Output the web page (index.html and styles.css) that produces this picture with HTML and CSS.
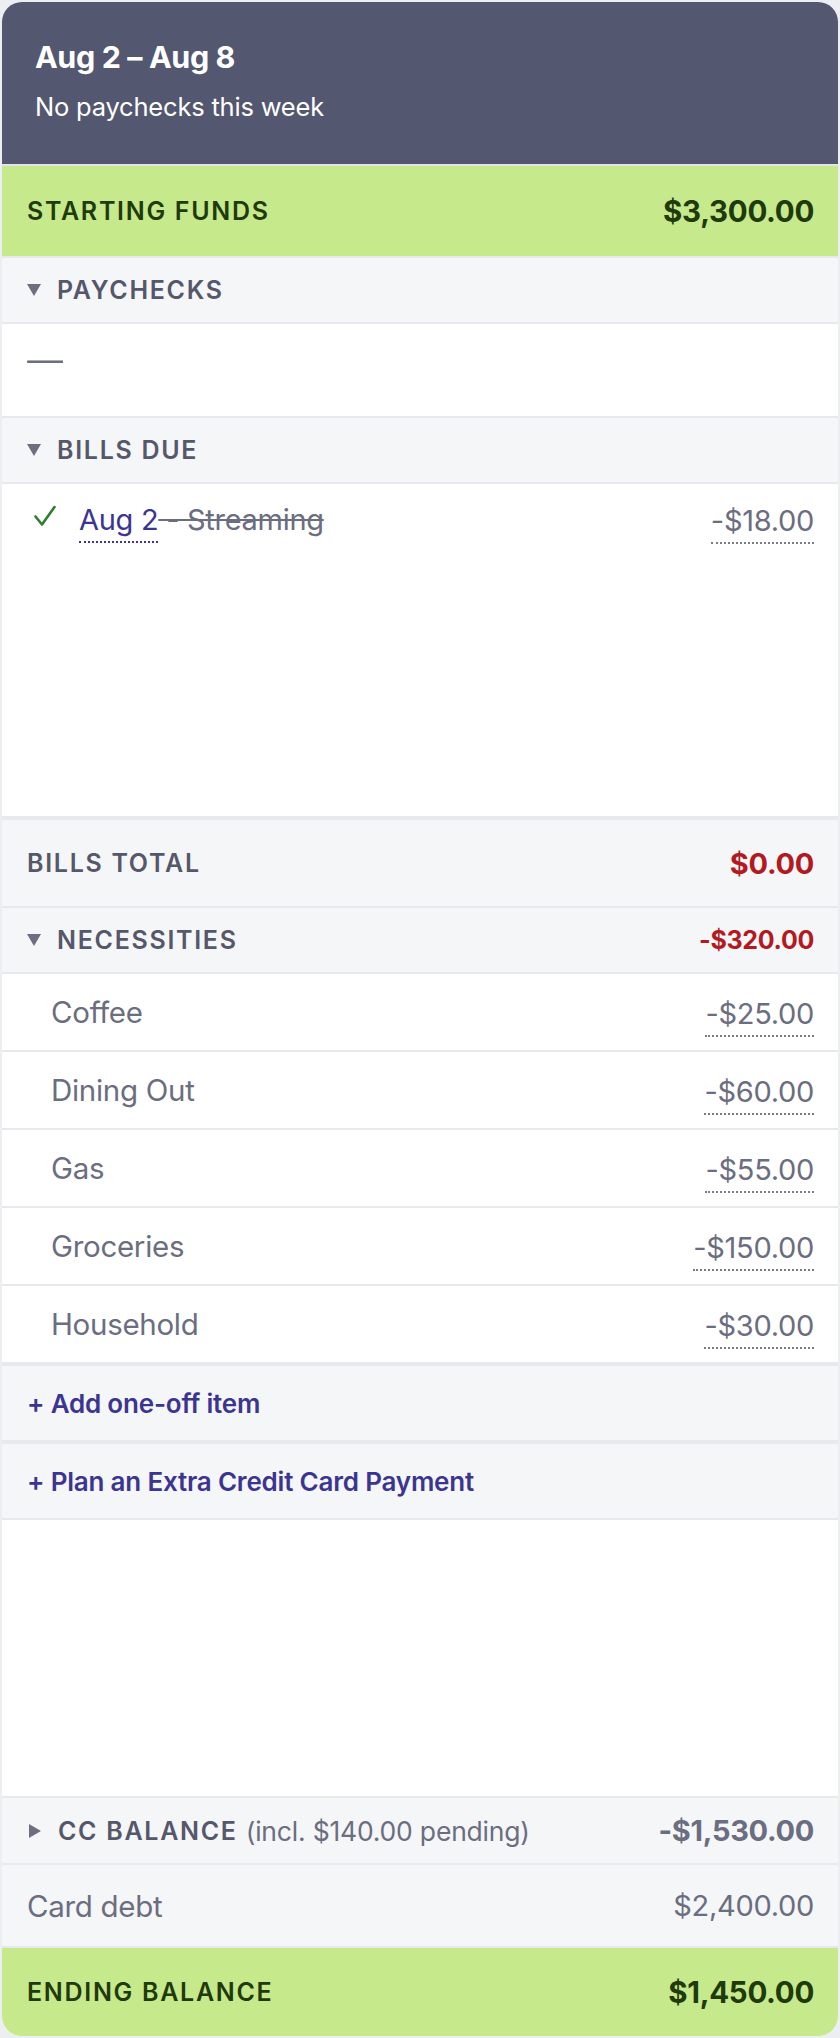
FILE: index.html
```html
<!DOCTYPE html>
<html lang="en">
<head>
    <meta charset="UTF-8">
    <meta name="viewport" content="width=device-width, initial-scale=1.0">
    <title>Aug 2 – Aug 8</title>
    <link rel="stylesheet" href="styles.css">
</head>
<body>
    <div class="week-card">
        <div class="week-header">
            <div class="week-title">Aug 2 – Aug 8</div>
            <div class="week-sub">No paychecks this week</div>
        </div>

        <div class="row total-row green">
            <span class="label caps">Starting Funds</span>
            <span class="amount strong">$3,300.00</span>
        </div>

        <div class="row section-head">
            <span class="label caps"><span class="caret down"></span>Paychecks</span>
        </div>
        <div class="row empty-body">
            <span class="dash">—</span>
        </div>

        <div class="row section-head">
            <span class="label caps"><span class="caret down"></span>Bills Due</span>
        </div>
        <div class="bills-body thick-bottom">
            <div class="bill-row">
                <svg class="check" viewBox="0 0 24 24" width="24" height="24">
                    <path d="M2.5 12.5 L9 20.5 L21.5 3" fill="none" stroke="#2e7d32" stroke-width="2.6" stroke-linecap="round" stroke-linejoin="round"/>
                </svg>
                <span class="bill-name"><span class="bill-date">Aug 2</span><span class="bill-paid"> - Streaming</span></span>
                <span class="amount dotted">-$18.00</span>
            </div>
        </div>

        <div class="row total-row gray">
            <span class="label caps">Bills Total</span>
            <span class="amount strong red">$0.00</span>
        </div>

        <div class="row section-head">
            <span class="label caps"><span class="caret down"></span>Necessities</span>
            <span class="amount strong red small">-$320.00</span>
        </div>
        <div class="row item-row"><span class="item-name">Coffee</span><span class="amount dotted">-$25.00</span></div>
        <div class="row item-row"><span class="item-name">Dining Out</span><span class="amount dotted">-$60.00</span></div>
        <div class="row item-row"><span class="item-name">Gas</span><span class="amount dotted">-$55.00</span></div>
        <div class="row item-row"><span class="item-name">Groceries</span><span class="amount dotted">-$150.00</span></div>
        <div class="row item-row thick-bottom"><span class="item-name">Household</span><span class="amount dotted">-$30.00</span></div>

        <div class="row add-row thick-bottom"><a class="add-link" href="#">+ Add one-off item</a></div>
        <div class="row add-row"><a class="add-link" href="#">+ Plan an Extra Credit Card Payment</a></div>

        <div class="row spacer"></div>

        <div class="row section-head cc-row">
            <span class="label caps"><span class="caret right"></span>CC Balance <span class="note">(incl. $140.00 pending)</span></span>
            <span class="amount strong">-$1,530.00</span>
        </div>
        <div class="row debt-row">
            <span class="item-name">Card debt</span>
            <span class="amount">$2,400.00</span>
        </div>

        <div class="row total-row green ending">
            <span class="label caps">Ending Balance</span>
            <span class="amount strong">$1,450.00</span>
        </div>
    </div>
</body>
</html>
```

FILE: styles.css
```css
body {
    margin: 0;
    padding: 2px 2px 3px 2px;
    background-color: #eceef1;
    font-family: Inter, "Liberation Sans", sans-serif;
}
.week-card {
    background: white;
    border-radius: 20px;
    overflow: hidden;
    display: flex;
    flex-direction: column;
}
.week-header {
    background-color: #545770;
    color: white;
    height: 164px;
    box-sizing: border-box;
    padding: 37px 33px 0;
    border-bottom: 2px solid #e3e4e8;
}
.week-title {
    font-size: 30.5px;
    font-weight: 700;
    letter-spacing: -0.4px;
    line-height: 36px;
}
.week-sub {
    font-size: 25.5px;
    line-height: 30px;
    margin-top: 17px;
    letter-spacing: -0.2px;
}
.row {
    display: flex;
    align-items: center;
    justify-content: space-between;
    padding: 0 24px 0 25px;
    border-bottom: 2px solid #e8e9ec;
    box-sizing: content-box;
}
.thick-bottom {
    border-bottom: 4px solid #e8e9ec;
}
.caps {
    text-transform: uppercase;
    letter-spacing: 1.7px;
    font-weight: 600;
    font-size: 25px;
}
.label {
    color: #55576b;
    display: flex;
    align-items: center;
    white-space: nowrap;
}
.amount {
    font-size: 29px;
    color: #6b6d80;
    letter-spacing: -0.3px;
}
.amount.strong {
    font-weight: 700;
}
.amount.small {
    font-size: 25px;
}
.amount.red {
    color: #b3191f;
}
.amount.dotted {
    padding-bottom: 4px;
    border-bottom: 2px dotted #7a7c8c;
    margin-top: 8px;
}
.total-row {
    height: 90px;
}
.green {
    background-color: #c6e98c;
}
.green .label,
.green .amount {
    color: #1f3a0b;
}
.green .amount {
    font-size: 29.5px;
}
.gray {
    background-color: #f5f6f8;
    height: 86px;
}
.ending {
    height: 88px;
    border-bottom: none;
}
.section-head {
    background-color: #f5f6f8;
    height: 64px;
}
.caret {
    display: inline-block;
    width: 0;
    height: 0;
    margin-right: 16px;
}
.caret.down {
    border-left: 7px solid transparent;
    border-right: 7px solid transparent;
    border-top: 12px solid #6d6f80;
}
.caret.right {
    border-top: 7px solid transparent;
    border-bottom: 7px solid transparent;
    border-left: 12px solid #6d6f80;
    margin-left: 2px;
    margin-right: 17px;
}
.empty-body {
    height: 92px;
}
.dash {
    color: #6d6f80;
    font-size: 30px;
    margin-top: -20px;
    transform: scaleX(1.2);
    transform-origin: left center;
}
.bills-body {
    height: 332px;
}
.bill-row {
    display: flex;
    align-items: center;
    padding: 11px 24px 0 31px;
}
.check {
    margin-right: 22px;
    margin-top: -8px;
}
.bill-name {
    flex: 1;
    font-size: 29px;
    letter-spacing: -0.3px;
}
.bill-date {
    color: #3b3591;
    border-bottom: 2px dotted #3b3591;
    padding-bottom: 4px;
}
.bill-paid {
    color: #6b6d80;
    text-decoration: line-through;
}
.item-row {
    height: 76px;
    padding-left: 49px;
}
.item-name {
    font-size: 29.5px;
    color: #6b6d80;
    letter-spacing: -0.3px;
}
.add-row {
    height: 74px;
    background-color: #f5f6f8;
}
.add-link {
    color: #3b3591;
    font-weight: 600;
    font-size: 26px;
    text-decoration: none;
    letter-spacing: -0.2px;
}
.spacer {
    height: 276px;
}
.cc-row {
    height: 65px;
}
.note {
    text-transform: none;
    font-weight: 400;
    letter-spacing: -0.2px;
    color: #6b6d80;
    font-size: 26.5px;
    margin-left: 8px;
}
.debt-row {
    height: 81px;
    background-color: #f5f6f8;
}
```
